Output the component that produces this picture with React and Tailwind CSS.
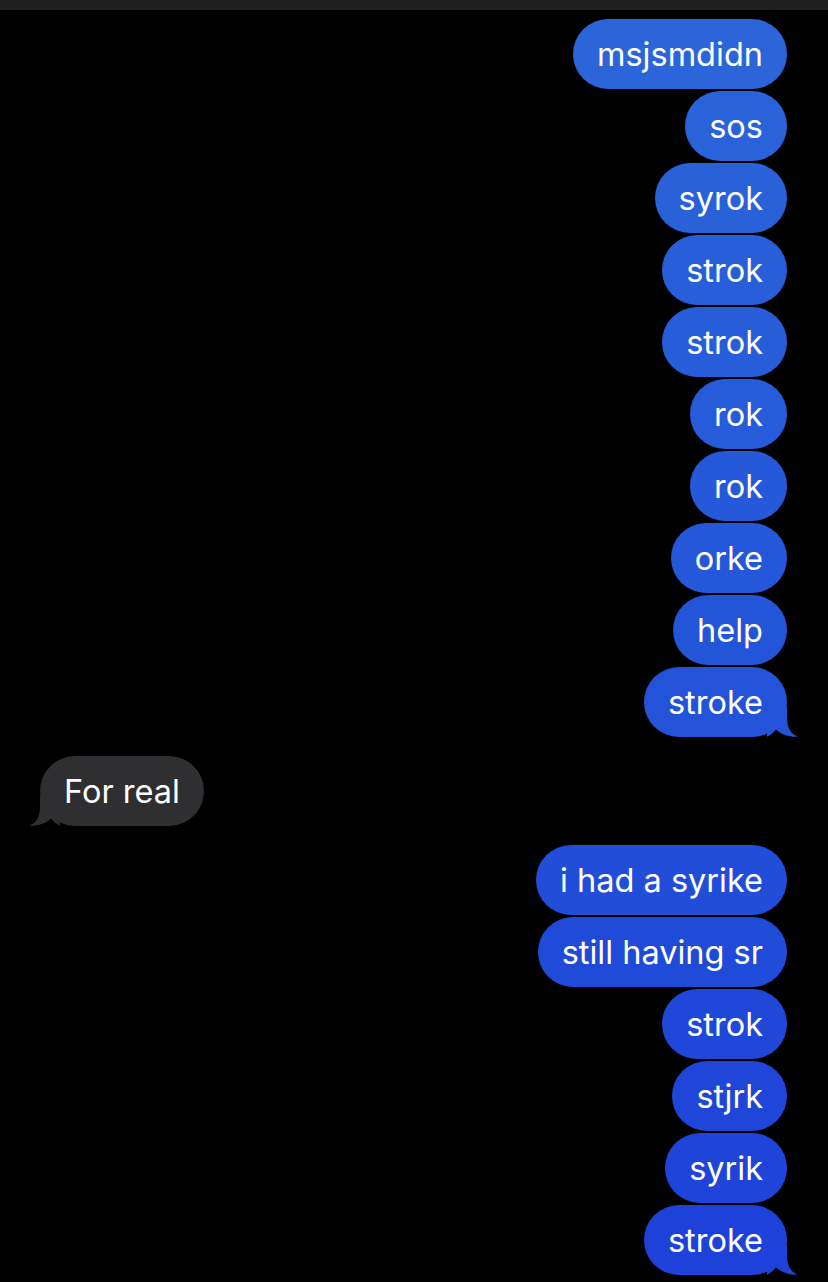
import React from 'react';

const groups = [
  {
    me: true,
    items: [
      ['msjsmdidn', 'bg-[#2b65d9]'],
      ['sos', 'bg-[#2a63d9]'],
      ['syrok', 'bg-[#2961d9]'],
      ['strok', 'bg-[#285fd9]'],
      ['strok', 'bg-[#275dd9]'],
      ['rok', 'bg-[#265bd9]'],
      ['rok', 'bg-[#2559d9]'],
      ['orke', 'bg-[#2457d9]'],
      ['help', 'bg-[#2355d9]'],
      ['stroke', 'bg-[#2253d9]'],
    ],
  },
  { me: false, items: [['For real', 'bg-[#2f2f31]']] },
  {
    me: true,
    items: [
      ['i had a syrike', 'bg-[#214dd9]'],
      ['still having sr', 'bg-[#204bd9]'],
      ['strok', 'bg-[#1f48d9]'],
      ['stjrk', 'bg-[#1f46d9]'],
      ['syrik', 'bg-[#1e44d9]'],
      ['stroke', 'bg-[#1e42d9]'],
    ],
  },
];

// bubble tail colours, spelled out so tailwind picks them up
const tailColors = {
  'bg-[#2253d9]': 'text-[#2253d9]',
  'bg-[#1e42d9]': 'text-[#1e42d9]',
  'bg-[#2f2f31]': 'text-[#2f2f31]',
};

function Tail({ me, color }) {
  if (me) {
    return (
      <svg className={`absolute right-[-12px] bottom-0 ${color}`} width="32" height="30" viewBox="0 0 32 30" fill="currentColor">
        <path d="M0 0 H20 V10 C20 21 24 27.5 31 29.6 C24 30.4 15 28 9 22.5 C6 26 3 28.5 0 29.7 Z" />
      </svg>
    );
  }
  return (
    <svg className={`absolute left-[-12px] bottom-0 ${color}`} width="32" height="30" viewBox="0 0 32 30" fill="currentColor">
      <path d="M32 0 H12 V10 C12 21 8 27.5 1 29.6 C8 30.4 17 28 23 22.5 C26 26 29 28.5 32 29.7 Z" />
    </svg>
  );
}

function Bubble({ text, bg, me, tail }) {
  return (
    <div className={`flex ${me ? 'justify-end' : 'justify-start'}`}>
      <div className={`relative h-[70px] flex items-center px-[24px] pt-[2px] rounded-[35px] ${bg}`}>
        {tail && <Tail me={me} color={tailColors[bg]} />}
        <span className="relative text-white text-[32.5px] leading-none">{text}</span>
      </div>
    </div>
  );
}

export default function App() {
  return (
    <div className="w-[828px] h-[1282px] bg-black overflow-hidden" style={{ fontFamily: 'Inter, "Noto Sans", sans-serif' }}>
      <div className="h-[10px] bg-[#1e1e1f]" />
      <div className="flex flex-col gap-[19px] pt-[9px] pl-[40px] pr-[41px]">
        {groups.map((g, gi) => (
          <div key={gi} className="flex flex-col gap-[2px]">
            {g.items.map(([text, bg], i) => (
              <Bubble key={i} text={text} bg={bg} me={g.me} tail={i === g.items.length - 1} />
            ))}
          </div>
        ))}
      </div>
    </div>
  );
}
